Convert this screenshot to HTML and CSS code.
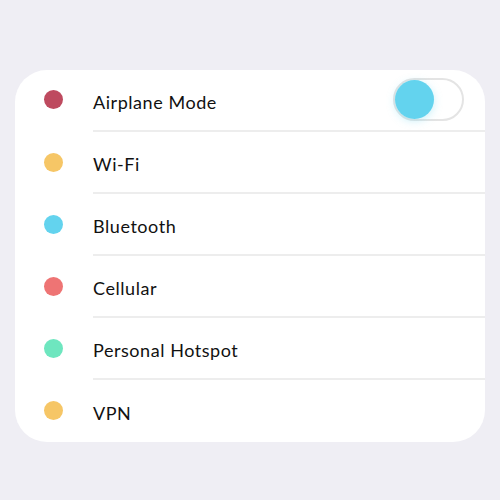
FILE: index.html
```html
<!DOCTYPE html>
<html>
<head>
<meta charset="utf-8">
<link rel="stylesheet" href="styles.css">
</head>
<body>
<div class="page">
  <div class="card">
    <div class="row">
      <span class="dot dot-airplane"></span>
      <div class="content">
        <span class="label">Airplane Mode</span>
        <div class="toggle"><span class="knob"></span></div>
      </div>
    </div>
    <div class="row">
      <span class="dot dot-wifi"></span>
      <div class="content"><span class="label">Wi-Fi</span></div>
    </div>
    <div class="row">
      <span class="dot dot-bt"></span>
      <div class="content"><span class="label">Bluetooth</span></div>
    </div>
    <div class="row">
      <span class="dot dot-cell"></span>
      <div class="content"><span class="label">Cellular</span></div>
    </div>
    <div class="row">
      <span class="dot dot-hotspot"></span>
      <div class="content"><span class="label">Personal Hotspot</span></div>
    </div>
    <div class="row">
      <span class="dot dot-vpn"></span>
      <div class="content last"><span class="label">VPN</span></div>
    </div>
  </div>
</div>
</body>
</html>
```
FILE: styles.css
```css
* { box-sizing: border-box; }
html, body { margin: 0; padding: 0; }
body {
  background: #efeef4;
  font-family: "Lato", "Noto Sans", sans-serif;
  width: 500px;
  height: 500px;
}
.page {
  padding: 70px 15px 0 15px;
}
.card {
  background: #ffffff;
  border-radius: 32px;
  width: 470px;
  height: 372px;
  display: flex;
  flex-direction: column;
  overflow: hidden;
}
.row {
  height: 62px;
  display: flex;
  align-items: stretch;
  padding-left: 29px;
}
.dot {
  width: 19px;
  height: 19px;
  border-radius: 50%;
  align-self: center;
  margin-right: 30px;
  margin-top: -2px;
  flex: none;
}
.row:first-child .dot { margin-top: -4px; }
.dot-airplane { background: #be4a5f; }
.dot-wifi { background: #f6c666; }
.dot-bt { background: #63d3ee; }
.dot-cell { background: #ee7474; }
.dot-hotspot { background: #6ee6bf; }
.dot-vpn { background: #f6c666; }
.content {
  flex: 1;
  display: flex;
  align-items: center;
  justify-content: space-between;
  border-bottom: 2px solid #ededed;
  padding-right: 21px;
  padding-top: 3px;
}
.content.last { border-bottom: none; }
.label {
  font-size: 18px;
  color: #111111;
  letter-spacing: 0.55px;
}
.toggle {
  position: relative;
  width: 71px;
  height: 43px;
  margin-top: -5px;
  border: 2px solid #e4e4e4;
  border-radius: 22px;
  background: #ffffff;
}
.knob {
  position: absolute;
  left: 0px;
  top: 0px;
  width: 39px;
  height: 39px;
  border-radius: 50%;
  background: #63d3ee;
  box-shadow: 0 2px 8px rgba(99, 211, 238, 0.35);
}
```
